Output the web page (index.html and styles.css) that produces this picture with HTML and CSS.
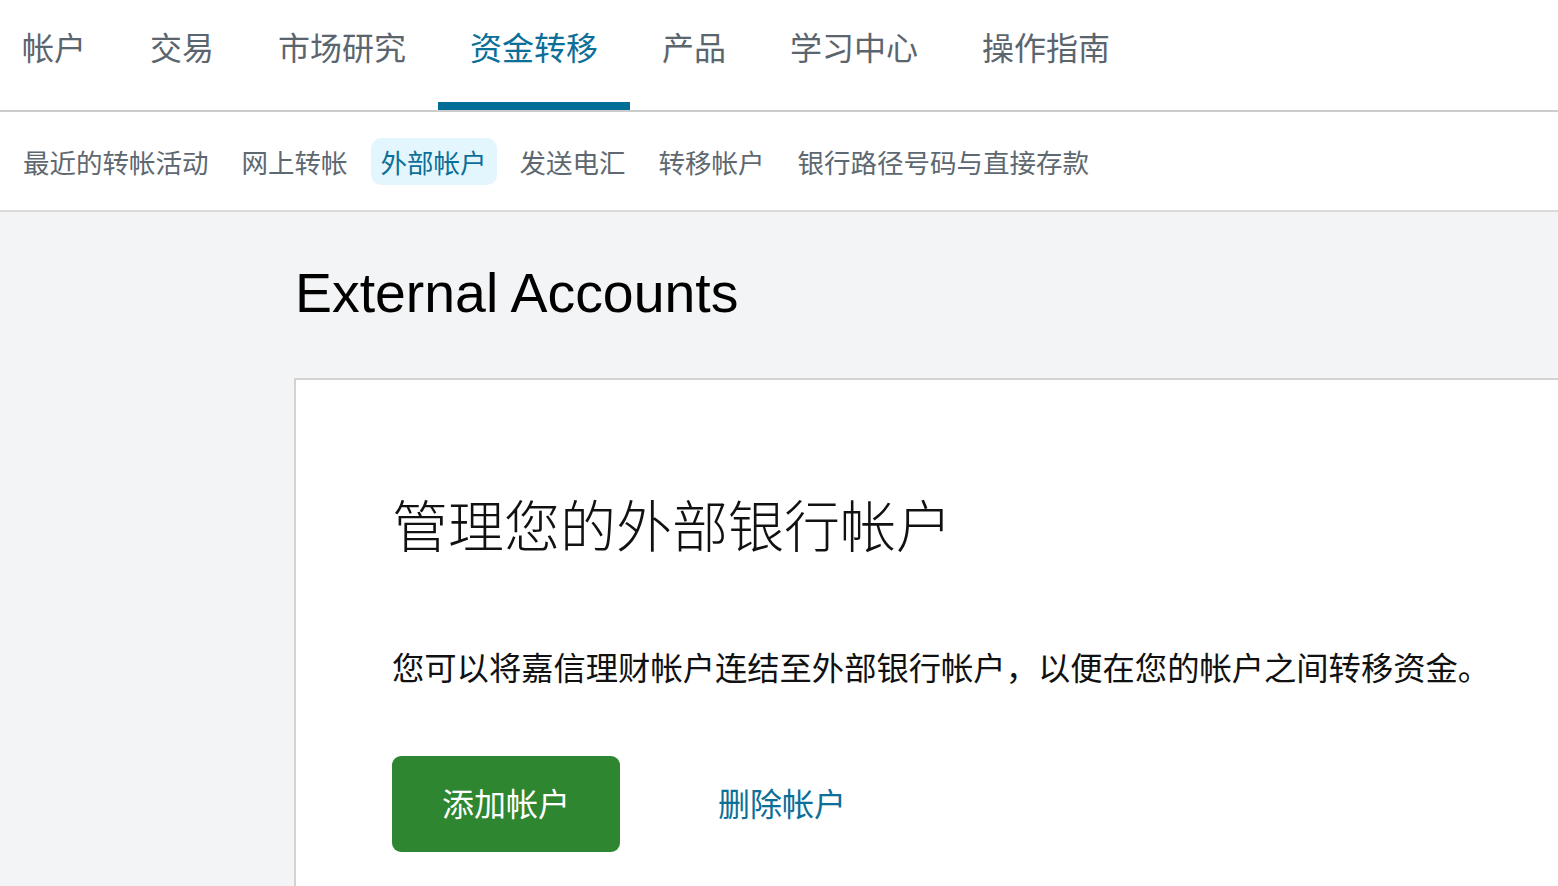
FILE: index.html
```html
<!DOCTYPE html>
<html lang="zh-CN">
<head>
<meta charset="utf-8">
<title>External Accounts</title>
<link rel="stylesheet" href="styles.css">
</head>
<body>
<header class="topnav">
  <a class="topnav-item first">帐户</a>
  <a class="topnav-item">交易</a>
  <a class="topnav-item">市场研究</a>
  <a class="topnav-item active">资金转移</a>
  <a class="topnav-item">产品</a>
  <a class="topnav-item">学习中心</a>
  <a class="topnav-item">操作指南</a>
</header>
<nav class="subnav">
  <a class="subnav-item">最近的转帐活动</a>
  <a class="subnav-item">网上转帐</a>
  <a class="subnav-item active">外部帐户</a>
  <a class="subnav-item">发送电汇</a>
  <a class="subnav-item">转移帐户</a>
  <a class="subnav-item">银行路径号码与直接存款</a>
</nav>
<main class="main">
  <h1 class="page-title">External Accounts</h1>
  <section class="card">
    <h2 class="card-title">管理您的外部银行帐户</h2>
    <p class="card-text">您可以将嘉信理财帐户连结至外部银行帐户，以便在您的帐户之间转移资金。</p>
    <div class="actions">
      <button class="btn-primary" type="button">添加帐户</button>
      <a class="link">删除帐户</a>
    </div>
  </section>
</main>
</body>
</html>
```
FILE: styles.css
```css
* { box-sizing: border-box; }
html, body {
  margin: 0;
  padding: 0;
  height: 100%;
}
body {
  font-family: "Noto Sans CJK SC", "Noto Sans", sans-serif;
  background: #f3f4f5;
  overflow: hidden;
  display: flex;
  flex-direction: column;
}
a { text-decoration: none; cursor: pointer; }

.topnav {
  display: flex;
  background: #ffffff;
  border-bottom: 2px solid #cccccc;
  flex: none;
}
.topnav-item {
  display: block;
  font-size: 32px;
  line-height: 48px;
  padding: 22px 32px 32px;
  border-bottom: 8px solid transparent;
  color: #5b656e;
  white-space: nowrap;
}
.topnav-item.first { padding-left: 22px; }
.topnav-item.active {
  color: #0b6f97;
  border-bottom-color: #006e96;
}

.subnav {
  display: flex;
  align-items: center;
  gap: 13px;
  height: 100px;
  padding-left: 13px;
  background: #ffffff;
  border-bottom: 2px solid #dadada;
  flex: none;
}
.subnav-item {
  font-size: 26.5px;
  line-height: 37px;
  padding: 5px 10px;
  border-radius: 10px;
  color: #5e6870;
  white-space: nowrap;
}
.subnav-item.active {
  background: #e4f6fd;
  color: #0b6f97;
}

.main {
  flex: 1;
  padding: 50px 0 0 295px;
  display: flex;
  flex-direction: column;
}
.page-title {
  margin: 0;
  font-family: "Liberation Sans", Arial, sans-serif;
  font-weight: 400;
  font-size: 55.4px;
  line-height: 63px;
  color: #000000;
}
.card {
  flex: 1;
  margin-top: 53px;
  margin-left: -1px;
  background: #ffffff;
  border: 2px solid #d3d3d3;
  border-right: none;
  border-bottom: none;
  padding: 107px 0 0 96px;
}
.card-title {
  margin: 0;
  font-size: 56px;
  line-height: 72px;
  font-weight: 300;
  color: #111111;
}
.card-text {
  margin: 83px 0 0;
  font-size: 32.3px;
  line-height: 48px;
  color: #111111;
  white-space: nowrap;
}
.actions {
  display: flex;
  align-items: center;
  gap: 98px;
  margin-top: 66px;
}
.btn-primary {
  width: 228px;
  height: 96px;
  border: none;
  border-radius: 9px;
  background: #2e8630;
  color: #ffffff;
  font-family: "Noto Sans CJK SC", "Noto Sans", sans-serif;
  font-size: 32px;
  line-height: 44px;
  padding: 0 0 4px;
  cursor: pointer;
}
.link {
  font-size: 32px;
  line-height: 44px;
  padding-bottom: 4px;
  color: #0b6f97;
}
```
